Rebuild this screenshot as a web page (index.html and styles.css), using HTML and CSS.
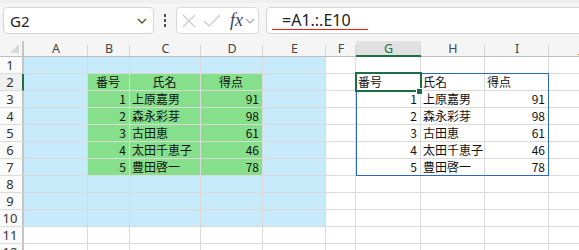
FILE: index.html
```html
<!DOCTYPE html>
<html lang="ja">
<head>
<meta charset="utf-8">
<link rel="stylesheet" href="styles.css">
</head>
<body>
<div class="app">
  <div class="toolbar">
    <div class="namebox">
      <span class="ref">G2</span>
      <svg class="chev" width="10" height="6" viewBox="0 0 10 6"><polyline points="1,1 5,5 9,1" fill="none" stroke="#4f5b1c" stroke-width="1.4"/></svg>
    </div>
    <div class="dots"><i></i><i></i><i></i></div>
    <div class="fxbox">
      <svg class="ico" width="16" height="16" viewBox="0 0 16 16"><path d="M2 2 L14 14 M14 2 L2 14" stroke="#c9c9c9" stroke-width="1.2" fill="none"/></svg>
      <svg class="ico" width="18" height="16" viewBox="0 0 18 16"><polyline points="1,8 6,13 17,2" stroke="#c9c9c9" stroke-width="1.2" fill="none"/></svg>
      <span class="fx">fx</span>
      <svg class="chev2" width="10" height="6" viewBox="0 0 10 6"><polyline points="1,1 5,5 9,1" fill="none" stroke="#a8a8a8" stroke-width="1.2"/></svg>
    </div>
    <div class="formula"><span class="ftext">=A1.:.E10</span><span class="uline"></span></div>
  </div>
  <div class="sheet">
    <div class="grid">
      <div class="corner"><svg width="9" height="9" viewBox="0 0 9 9"><polygon points="9,0 9,9 0,9" fill="#d9d9d9"/></svg></div>
      <div class="ch">A</div><div class="ch">B</div><div class="ch">C</div><div class="ch">D</div><div class="ch">E</div><div class="ch">F</div><div class="ch sel">G</div><div class="ch">H</div><div class="ch">I</div><div class="ch j">J</div>

      <div class="rh">1</div>
      <div class="c b"></div><div class="c b"></div><div class="c b"></div><div class="c b"></div><div class="c b"></div><div class="c"></div><div class="c"></div><div class="c"></div><div class="c"></div><div class="c"></div>

      <div class="rh selr">2</div>
      <div class="c b"></div><div class="c g ctr">番号</div><div class="c g ctr">氏名</div><div class="c g ctr">得点</div><div class="c b"></div><div class="c"></div><div class="c">番号</div><div class="c">氏名</div><div class="c">得点</div><div class="c"></div>

      <div class="rh">3</div>
      <div class="c b"></div><div class="c g r">1</div><div class="c g">上原嘉男</div><div class="c g r">91</div><div class="c b"></div><div class="c"></div><div class="c r">1</div><div class="c">上原嘉男</div><div class="c r">91</div><div class="c"></div>

      <div class="rh">4</div>
      <div class="c b"></div><div class="c g r">2</div><div class="c g">森永彩芽</div><div class="c g r">98</div><div class="c b"></div><div class="c"></div><div class="c r">2</div><div class="c">森永彩芽</div><div class="c r">98</div><div class="c"></div>

      <div class="rh">5</div>
      <div class="c b"></div><div class="c g r">3</div><div class="c g">古田恵</div><div class="c g r">61</div><div class="c b"></div><div class="c"></div><div class="c r">3</div><div class="c">古田恵</div><div class="c r">61</div><div class="c"></div>

      <div class="rh">6</div>
      <div class="c b"></div><div class="c g r">4</div><div class="c g">太田千恵子</div><div class="c g r">46</div><div class="c b"></div><div class="c"></div><div class="c r">4</div><div class="c">太田千恵子</div><div class="c r">46</div><div class="c"></div>

      <div class="rh">7</div>
      <div class="c b"></div><div class="c g r">5</div><div class="c g">豊田啓一</div><div class="c g r">78</div><div class="c b"></div><div class="c"></div><div class="c r">5</div><div class="c">豊田啓一</div><div class="c r">78</div><div class="c"></div>

      <div class="rh">8</div>
      <div class="c b"></div><div class="c b"></div><div class="c b"></div><div class="c b"></div><div class="c b"></div><div class="c"></div><div class="c"></div><div class="c"></div><div class="c"></div><div class="c"></div>

      <div class="rh">9</div>
      <div class="c b"></div><div class="c b"></div><div class="c b"></div><div class="c b"></div><div class="c b"></div><div class="c"></div><div class="c"></div><div class="c"></div><div class="c"></div><div class="c"></div>

      <div class="rh">10</div>
      <div class="c b"></div><div class="c b"></div><div class="c b"></div><div class="c b"></div><div class="c b"></div><div class="c"></div><div class="c"></div><div class="c"></div><div class="c"></div><div class="c"></div>

      <div class="rh">11</div>
      <div class="c"></div><div class="c"></div><div class="c"></div><div class="c"></div><div class="c"></div><div class="c"></div><div class="c"></div><div class="c"></div><div class="c"></div><div class="c"></div>

      <div class="rh">12</div>
      <div class="c"></div><div class="c"></div><div class="c"></div><div class="c"></div><div class="c"></div><div class="c"></div><div class="c"></div><div class="c"></div><div class="c"></div><div class="c"></div>
    </div>
    <div class="spill"></div>
    <div class="active"></div>
    <div class="handle"></div>
  </div>
</div>
</body>
</html>
```
FILE: styles.css
```css
* { box-sizing: border-box; }
html, body { margin: 0; padding: 0; }
body {
  width: 579px;
  height: 250px;
  overflow: hidden;
  background: #f5f5f5;
  font-family: "Noto Sans", "Liberation Sans", sans-serif;
  color: #222;
}
.app { width: 579px; height: 250px; overflow: hidden; }

.toolbar {
  height: 41px;
  display: flex;
  align-items: flex-start;
  padding: 4px 0 0 3px;
  background: #f5f5f5;
  border-top: 3px solid #efefef;
}
.namebox {
  width: 151px;
  height: 27px;
  background: #fff;
  border: 1px solid #d4d4d4;
  border-radius: 4px;
  display: flex;
  align-items: center;
  justify-content: space-between;
  padding: 0 6px;
}
.ref { font-size: 15px; color: #222; }
.chev { display: block; margin-top: 1px; }
.dots {
  width: 22px;
  height: 27px;
  display: flex;
  flex-direction: column;
  align-items: center;
  justify-content: center;
  gap: 2px;
}
.dots i { display: block; width: 2px; height: 3px; background: #4a4a4a; }
.fxbox {
  width: 83px;
  height: 27px;
  background: #fff;
  border: 1px solid #d9d9d9;
  border-radius: 4px;
  display: flex;
  align-items: center;
  padding: 0 0 0 4px;
  gap: 6px;
}
.ico { display: block; }
.fx {
  font-family: "Liberation Serif", "DejaVu Serif", serif;
  font-style: italic;
  font-size: 18px;
  color: #3a3f5a;
  margin-left: 3px;
  line-height: 20px;
  margin-top: -2px;
}
.chev2 { display: block; margin-left: -4px; }
.formula {
  flex: 1;
  margin-left: 7px;
  margin-right: -10px;
  height: 27px;
  background: #fff;
  border: 1px solid #d4d4d4;
  border-radius: 4px;
  position: relative;
  padding-left: 15px;
}
.ftext {
  font-size: 16px;
  line-height: 24px;
  color: #222;
  display: inline-block;
}
.uline {
  position: absolute;
  left: 5px;
  top: 21px;
  width: 96px;
  height: 1px;
  background: #ff1a1a;
}

.sheet {
  position: relative;
  background: #fff;
  height: 209px;
  overflow: hidden;
}
.grid {
  display: grid;
  grid-template-columns: 24px 64px 42px 71px 62px 63px 30px 65px 64px 64px 64px;
  grid-template-rows: 16px repeat(12, 17px);
  width: 613px;
}
.corner {
  background: #f5f5f5;
  border-right: 2px solid #c4c4c4;
  border-bottom: 1px solid #bdbdbd;
  display: flex;
  align-items: flex-end;
  justify-content: flex-end;
  padding: 0 3px 3px 0;
}
.corner svg { display: block; }
.ch {
  background: #f5f5f5;
  border-bottom: 1px solid #bdbdbd;
  font-size: 12.5px;
  color: #444;
  text-align: center;
  line-height: 14px;
  padding-top: 1px;
  position: relative;
}
.ch::after {
  content: "";
  position: absolute;
  right: 0;
  top: 4px;
  bottom: 0;
  width: 1px;
  background: #d6d6d6;
}
.ch.sel {
  background: #e1e1e1;
  border-bottom: 2px solid #1e6e43;
  color: #1e6e43;
}
.ch.j { color: #c55a11; }
.rh {
  background: #fbfbfb;
  border-right: 2px solid #c4c4c4;
  border-bottom: 1px solid #dcdcdc;
  font-size: 13px;
  color: #333;
  text-align: center;
  line-height: 16px;
  padding-right: 2px;
}
.rh.selr { border-right-color: #1e6e43; background: #f0f0f0; }
.c {
  border-right: 1px solid #dadada;
  border-bottom: 1px solid #dadada;
  font-family: "Noto Sans CJK JP", "Noto Sans", sans-serif;
  font-size: 12px;
  line-height: 16px;
  padding: 0 3px 0 2px;
  white-space: nowrap;
  overflow: hidden;
  color: #111;
}
.c.b { background: #c7ebfb; }
.c.g { background: #86e08b; }
.c.r { text-align: right; }
.c.ctr { text-align: center; }

.spill {
  position: absolute;
  left: 356px;
  top: 32px;
  width: 193px;
  height: 103px;
  border: 1px solid #2b67c8;
}
.active {
  position: absolute;
  left: 355px;
  top: 31px;
  width: 67px;
  height: 20px;
  border: 2px solid #1e6e43;
}
.handle {
  position: absolute;
  left: 416px;
  top: 47px;
  width: 7px;
  height: 7px;
  background: #1e6e43;
  border: 1px solid #fff;
}
```
